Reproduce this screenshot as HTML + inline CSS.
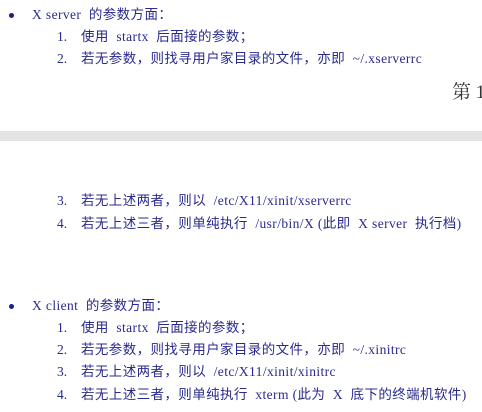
<!DOCTYPE html>
<html><head><meta charset="utf-8"><style>
body{margin:0;width:482px;height:412px;background:#fff;position:relative;overflow:hidden;font-family:"Liberation Serif","Noto Sans CJK SC",sans-serif;font-size:13.5px;color:#2a2a8e;}
.l{position:absolute;white-space:nowrap;line-height:16px;letter-spacing:0.4px;}
.b{position:absolute;width:5px;height:5px;border-radius:50%;background:#1c1c8a;}
.n{position:absolute;white-space:nowrap;line-height:16px;}
.band{position:absolute;left:0;top:131px;width:482px;height:10px;background:#e4e4e4;}
.pg{position:absolute;left:452px;top:82px;font-size:19px;color:#333;line-height:22px;white-space:nowrap;font-family:"Liberation Serif","Noto Serif CJK SC",serif;}
</style></head><body>
<div class="b" style="left:9px;top:13px"></div>
<div class="l" style="left:32px;top:7px">X server&nbsp; 的参数方面：</div>
<div class="n" style="left:57px;top:29px">1.</div><div class="l" style="left:81px;top:29px">使用&nbsp; startx&nbsp; 后面接的参数；</div>
<div class="n" style="left:57px;top:51px">2.</div><div class="l" style="left:81px;top:51px">若无参数，则找寻用户家目录的文件，亦即&nbsp; ~/.xserverrc</div>
<div class="pg">第 1</div>
<div class="band"></div>
<div class="n" style="left:57px;top:193px">3.</div><div class="l" style="left:81px;top:193px">若无上述两者，则以&nbsp; /etc/X11/xinit/xserverrc</div>
<div class="n" style="left:57px;top:216px">4.</div><div class="l" style="left:81px;top:216px">若无上述三者，则单纯执行&nbsp; /usr/bin/X (此即&nbsp; X server&nbsp; 执行档)</div>
<div class="b" style="left:9px;top:304px"></div>
<div class="l" style="left:32px;top:298px">X client&nbsp; 的参数方面：</div>
<div class="n" style="left:57px;top:320px">1.</div><div class="l" style="left:81px;top:320px">使用&nbsp; startx&nbsp; 后面接的参数；</div>
<div class="n" style="left:57px;top:342px">2.</div><div class="l" style="left:81px;top:342px">若无参数，则找寻用户家目录的文件，亦即&nbsp; ~/.xinitrc</div>
<div class="n" style="left:57px;top:364px">3.</div><div class="l" style="left:81px;top:364px">若无上述两者，则以&nbsp; /etc/X11/xinit/xinitrc</div>
<div class="n" style="left:57px;top:387px">4.</div><div class="l" style="left:81px;top:387px">若无上述三者，则单纯执行&nbsp; xterm (此为&nbsp; X&nbsp; 底下的终端机软件)</div>
</body></html>
